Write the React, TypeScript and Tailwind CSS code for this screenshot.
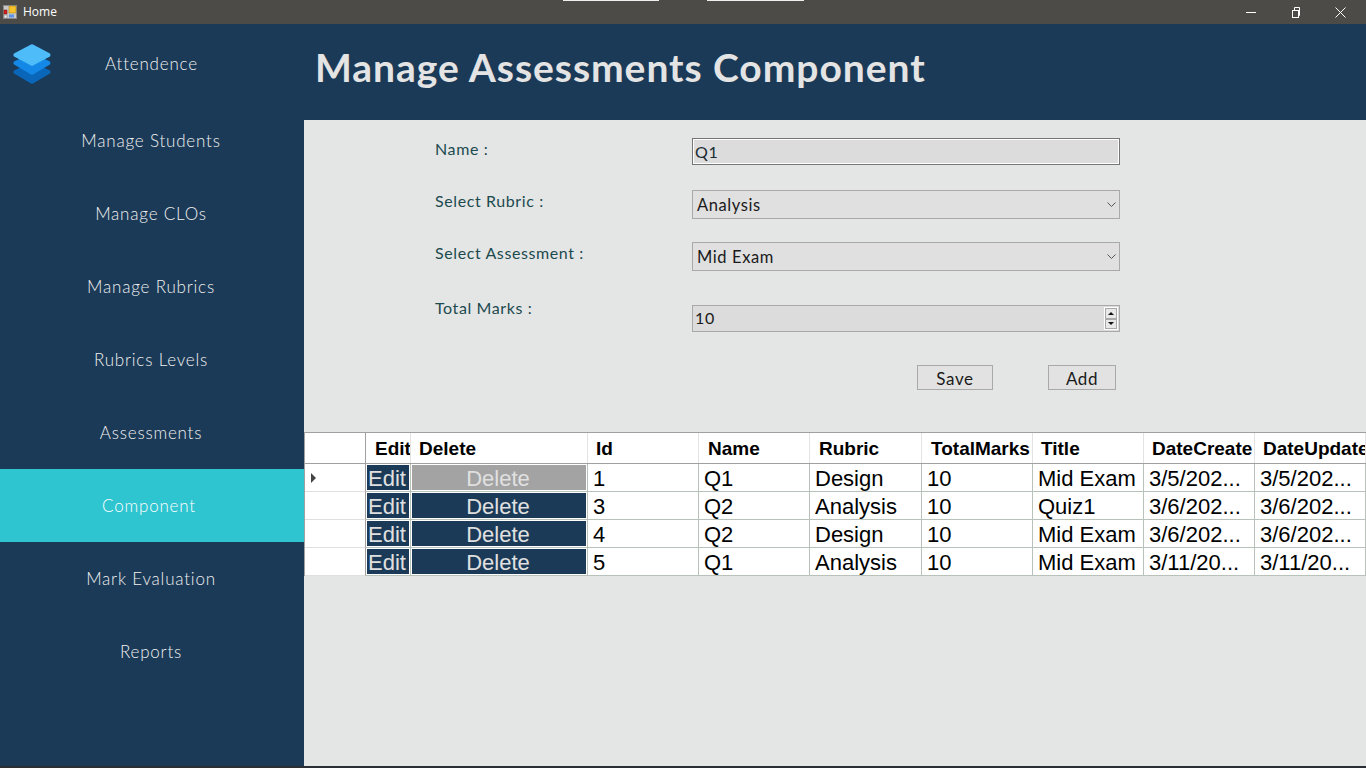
import { FunctionComponent } from "react";

const gothic = "font-['Lato','Open_Sans',sans-serif]";

const menu = ["Manage Students", "Manage CLOs", "Manage Rubrics", "Rubrics Levels", "Assessments", "Component", "Mark Evaluation", "Reports"];

const rows = [
  { id: "1", name: "Q1", rubric: "Design", marks: "10", title: "Mid Exam", created: "3/5/202...", updated: "3/5/202...", selected: true },
  { id: "3", name: "Q2", rubric: "Analysis", marks: "10", title: "Quiz1", created: "3/6/202...", updated: "3/6/202...", selected: false },
  { id: "4", name: "Q2", rubric: "Design", marks: "10", title: "Mid Exam", created: "3/6/202...", updated: "3/6/202...", selected: false },
  { id: "5", name: "Q1", rubric: "Analysis", marks: "10", title: "Mid Exam", created: "3/11/20...", updated: "3/11/20...", selected: false },
];

const gridCols = "grid grid-cols-[61px_45px_177px_111px_111px_112px_111px_111px_111px_111px]";

const AppIcon = () => (
  <svg width="14" height="14" viewBox="0 0 14 14" className="ml-[3px] shrink-0">
    <rect x="0.5" y="0.5" width="13" height="13" fill="#c9c9c9" stroke="#8a8a8a" />
    <rect x="1" y="5" width="3" height="4" fill="#d3201c" stroke="#7a1512" strokeWidth="0.5" />
    <rect x="6" y="1" width="7" height="7" fill="#f6c22e" stroke="#a57c12" strokeWidth="0.5" />
    <rect x="6" y="9.5" width="5" height="3" fill="#5b93e6" />
    <rect x="1" y="10" width="3" height="3" fill="#eeeeee" stroke="#777" strokeWidth="0.5" />
  </svg>
);

const Logo = () => (
  <svg width="40" height="42" viewBox="0 0 40 42">
    <path d="M20 18 L38 26.5 Q39 28 38 29.5 L21 39.5 Q20 40 19 39.5 L2 29.5 Q0.500 28 2 26.5 Z" fill="#0a66b8" />
    <path d="M20 9 L38 17.500 Q39 19 38 20.500 L21 30.500 Q20 31 19 30.500 L2 20.500 Q0.500 19 2 17.500 Z" fill="#1488e6" />
    <path d="M19 0.500 Q20 0 21 0.500 L38 9.500 Q39 11 38 12.500 L21 21.500 Q20 22 19 21.500 L2 12.500 Q0.500 11 2 9.500 Z" fill="#4dbcf8" />
  </svg>
);

const Chevron = () => (
  <svg width="9" height="6" viewBox="0 0 9 6" className="shrink-0">
    <path d="M0.500 0.500 L4.500 4.500 L8.500 0.500" fill="none" stroke="#555" strokeWidth="1" />
  </svg>
);

const SelectBox = ({ value }: { value: string }) => (
  <div className="w-[428px] h-[29px] flex items-center justify-between border border-[#a9a9a9] bg-[#e0e0e0] pl-[4px] pr-[3px] text-[16.500px] text-[#1a1a1a]">
    <span className="mt-[2px]">{value}</span>
    <Chevron />
  </div>
);

const Header = ({ children, pl }: { children?: string; pl: string }) => (
  <div className={`h-[30px] bg-white border-r border-[#e3e3e3] font-bold text-[19px] leading-[32px] text-black overflow-hidden whitespace-nowrap ${pl}`}>
    {children}
  </div>
);

const Cell = ({ children }: { children: string }) => (
  <div className="h-[28px] bg-white border-r border-b border-[#b9c2ba] pl-[5px] text-[22px] leading-[30px] text-black overflow-hidden whitespace-nowrap">
    {children}
  </div>
);

const ActionCell = ({ label, selected }: { label: string; selected: boolean }) => (
  <div className="h-[28px] bg-white border-r border-b border-[#b9c2ba] p-[1px]">
    <div className={`h-full flex items-center justify-center pt-[2px] pr-[2px] text-[22px] text-[#e0e0e0] overflow-hidden ${selected ? "bg-[#a3a3a3]" : "bg-[#1b3a57]"}`}>
      {label}
    </div>
  </div>
);

const App: FunctionComponent = () => {
  return (
    <div className="w-[1366px] h-[768px] flex flex-col overflow-hidden bg-[#1b3a57] font-['Liberation_Sans',sans-serif]">
      {/* title bar */}
      <div className="relative h-[24px] shrink-0 bg-[#4d4b48] flex items-center text-white">
        <AppIcon />
        <span className="ml-[6px] text-[12px] font-['Open_Sans',sans-serif]">Home</span>
        <div className="absolute left-[563px] top-0 w-[96px] h-[1px] bg-[#eeeeee]" />
        <div className="absolute left-[707px] top-0 w-[97px] h-[1px] bg-[#eeeeee]" />
        <div className="ml-auto mr-[3px] flex items-center">
          <div className="w-[45px] flex justify-center">
            <svg width="10" height="10" viewBox="0 0 10 10"><path d="M0 5.500 H10" stroke="#fff" strokeWidth="1" /></svg>
          </div>
          <div className="w-[45px] flex justify-center">
            <svg width="10" height="11" viewBox="0 0 10 11" fill="none" stroke="#fff" strokeWidth="1">
              <rect x="1.500" y="3.500" width="6" height="7" />
              <path d="M3.500 3.500 V0.500 H8.500 V8.500 H7.500" />
            </svg>
          </div>
          <div className="w-[45px] flex justify-center">
            <svg width="11" height="11" viewBox="0 0 11 11"><path d="M0.500 0.500 L10.500 10.500 M10.500 0.500 L0.500 10.500" stroke="#fff" strokeWidth="1" /></svg>
          </div>
        </div>
      </div>

      <div className="flex-1 flex min-h-0">
        {/* sidebar */}
        <div className={`w-[304px] shrink-0 flex flex-col text-[#f0f0f0] text-[17px] font-light tracking-[0.8px] ${gothic}`}>
          <div className="relative h-[80px] flex items-center justify-center pr-[1px]">
            <div className="absolute left-[12px] top-[20px]">
              <Logo />
            </div>
            <span>Attendence</span>
          </div>
          {menu.map((item) => (
            <div key={item} className={`h-[73px] flex items-center justify-center ${item === "Component" ? "bg-[#2ec4d0] text-white pr-[6px]" : "pr-[2px]"}`}>
              {item}
            </div>
          ))}
        </div>

        <div className="flex-1 flex flex-col min-w-0">
          <div className={`h-[96px] shrink-0 flex items-center pl-[11px] pb-[10px] font-bold text-[39px] tracking-[0.95px] text-[#e4e4e4] ${gothic}`}>
            Manage Assessments Component
          </div>

          <div className="flex-1 bg-[#e4e6e5] pb-[2px] flex flex-col">
            <div className="flex-1 flex flex-col">
              {/* form */}
              <div className={`flex flex-col pt-[18px] pl-[131px] text-[16px] tracking-[0.6px] text-[#1c4a4f] ${gothic}`}>
                <div className="flex h-[27px]">
                  <div className="w-[257px] leading-[22px]">Name :</div>
                  <div className="w-[428px] h-[27px] flex items-center border border-[#767676] outline outline-1 -outline-offset-2 outline-white bg-[#dcdcdc] pl-[2px] text-[#1a2a33]">
                    Q1
                  </div>
                </div>
                <div className="flex h-[29px] mt-[25px]">
                  <div className="w-[257px] leading-[22px]">Select Rubric :</div>
                  <SelectBox value="Analysis" />
                </div>
                <div className="flex h-[29px] mt-[23px]">
                  <div className="w-[257px] leading-[22px]">Select Assessment :</div>
                  <SelectBox value="Mid Exam" />
                </div>
                <div className="flex h-[27px] mt-[34px]">
                  <div className="w-[257px] leading-[22px] -mt-[8px]">Total Marks :</div>
                  <div className="w-[428px] h-[27px] flex items-center justify-between border border-[#a9a9a9] bg-[#dcdcdc] pl-[2px] pr-[1px] text-[#1a1a1a]">
                    <span className="mb-[2px]">10</span>
                    <div className="flex flex-col w-[14px] h-[23px] border border-white">
                      <div className="flex-1 flex items-center justify-center bg-[#e8e8e8] border border-[#a9a9a9]">
                        <div className="w-0 h-0 border-x-[3px] border-x-transparent border-b-[3px] border-b-[#111]" />
                      </div>
                      <div className="flex-1 flex items-center justify-center bg-[#e8e8e8] border border-[#a9a9a9]">
                        <div className="w-0 h-0 border-x-[3px] border-x-transparent border-t-[3px] border-t-[#111]" />
                      </div>
                    </div>
                  </div>
                </div>
                <div className="flex mt-[33px] pl-[482px] text-[#1a1a1a] text-[17px]">
                  <div className="w-[76px] h-[25px] flex items-center justify-center pt-[2px] border border-[#a9a9a9] bg-[#e2e2e2]">Save</div>
                  <div className="ml-[55px] w-[68px] h-[25px] flex items-center justify-center pt-[2px] border border-[#a9a9a9] bg-[#e2e2e2]">Add</div>
                </div>
              </div>

              {/* table */}
              <div className="mt-[42px] border-t border-[#a0a0a0] border-l border-l-[#a0a0a0]">
                <div className={`${gridCols} border-b border-[#a0a0a0]`}>
                  <div className="h-[30px] bg-white border-r border-[#a0a0a0]" />
                  <Header pl="pl-[9px]">Edit</Header>
                  <Header pl="pl-[8px]">Delete</Header>
                  <Header pl="pl-[8px]">Id</Header>
                  <Header pl="pl-[9px]">Name</Header>
                  <Header pl="pl-[9px]">Rubric</Header>
                  <Header pl="pl-[9px]">TotalMarks</Header>
                  <Header pl="pl-[8px]">Title</Header>
                  <Header pl="pl-[8px]">DateCreate</Header>
                  <Header pl="pl-[8px]">DateUpdate</Header>
                </div>
                {rows.map((row) => (
                  <div key={row.id} className={gridCols}>
                    <div className="h-[28px] bg-white border-r border-b border-r-[#a0a0a0] border-b-[#dfdfdf] flex items-center pl-[6px]">
                      {row.selected && (
                        <div className="w-0 h-0 border-y-[5px] border-y-transparent border-l-[5px] border-l-[#444]" />
                      )}
                    </div>
                    <ActionCell label="Edit" selected={false} />
                    <ActionCell label="Delete" selected={row.selected} />
                    <Cell>{row.id}</Cell>
                    <Cell>{row.name}</Cell>
                    <Cell>{row.rubric}</Cell>
                    <Cell>{row.marks}</Cell>
                    <Cell>{row.title}</Cell>
                    <Cell>{row.created}</Cell>
                    <Cell>{row.updated}</Cell>
                  </div>
                ))}
              </div>
            </div>
          </div>
        </div>
      </div>
      <div className="h-[2px] shrink-0 bg-[#2b2e33]" />
    </div>
  );
};

export default App;
